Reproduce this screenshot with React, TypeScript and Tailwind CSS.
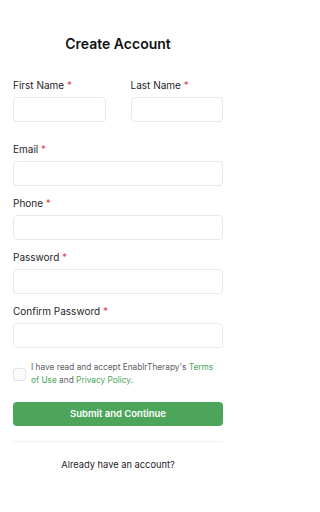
import React from 'react';

function Label({ text }: { text: string }) {
  return (
    <label className="block text-[10px] leading-[14px] text-[#1f2328]">
      {text} <span className="text-[#e5484d]">*</span>
    </label>
  );
}

function Field({ label, type = 'text' }: { label: string; type?: string }) {
  return (
    <div className="flex flex-col gap-[5px]">
      <Label text={label} />
      <input
        type={type}
        className="h-[25px] w-full rounded-[4px] border border-[#e6e8ee] bg-white px-2 text-[10px] outline-none"
      />
    </div>
  );
}

export default function App() {
  return (
    <div className="min-h-[512px] w-[236px] bg-white px-[13px] pt-[35px] font-['Inter',sans-serif] text-[#1f2328]">
      <h1 className="text-center text-[14px] font-semibold leading-[18px] text-[#111318]">Create Account</h1>

      <form className="mt-[25px] flex flex-col">
        <div className="grid grid-cols-2 gap-[25px]">
          <Field label="First Name" />
          <Field label="Last Name" />
        </div>
        <div className="mt-[20px] flex flex-col gap-[10px]">
          <Field label="Email" type="email" />
          <Field label="Phone" type="tel" />
          <Field label="Password" type="password" />
          <Field label="Confirm Password" type="password" />
        </div>

        <div className="mt-[13px] flex items-start gap-[5px]">
          <input
            type="checkbox"
            className="mt-[7px] h-[13px] w-[13px] shrink-0 appearance-none rounded-[3px] border border-[#dfe2e8] bg-[#fbfbfc]"
          />
          <p className="text-[8.3px] leading-[13px] text-[#5b6068]">
            I have read and accept EnablrTherapy's <a className="text-[#4ca55a]">Terms of Use</a> and{' '}
            <a className="text-[#4ca55a]">Privacy Policy</a>.
          </p>
        </div>

        <button
          type="button"
          className="mt-[15px] h-[24px] w-full rounded-[4px] bg-[#4ca55a] text-[9.5px] font-semibold text-white"
        >
          Submit and Continue
        </button>
      </form>

      <div className="mt-[15px] border-t border-[#eef0f3]" />
      <p className="mt-[16px] text-center text-[9.3px] leading-[14px] text-[#1f2328]">Already have an account?</p>
    </div>
  );
}
